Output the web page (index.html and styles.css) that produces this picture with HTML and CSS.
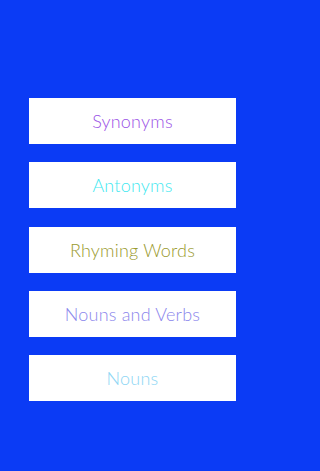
FILE: index.html
```html
<!DOCTYPE html>
<html>
<head>
<meta charset="utf-8">
<link rel="stylesheet" href="styles.css">
</head>
<body>
<main class="menu">
  <div class="item synonyms">Synonyms</div>
  <div class="item antonyms">Antonyms</div>
  <div class="item rhyming">Rhyming Words</div>
  <div class="item nounsverbs">Nouns and Verbs</div>
  <div class="item nouns">Nouns</div>
</main>
</body>
</html>
```
FILE: styles.css
```css
html, body {
  margin: 0;
  padding: 0;
  background: #0b3bf5;
  height: 100%;
}
.menu {
  display: flex;
  flex-direction: column;
  gap: 18.3px;
  padding: 98px 29px 0 29px;
}
.item {
  height: 46px;
  width: 207px;
  background: #ffffff;
  display: flex;
  align-items: center;
  justify-content: center;
  font-family: Lato, "Open Sans", sans-serif;
  font-weight: 300;
  font-size: 18px;
  letter-spacing: 0.2px;
}
.synonyms { color: #9b52e6; }
.antonyms { color: #3fe8f0; }
.rhyming { color: #9a9a2e; }
.nounsverbs { color: #8b86ec; }
.nouns { color: #8ed6f4; }
```
